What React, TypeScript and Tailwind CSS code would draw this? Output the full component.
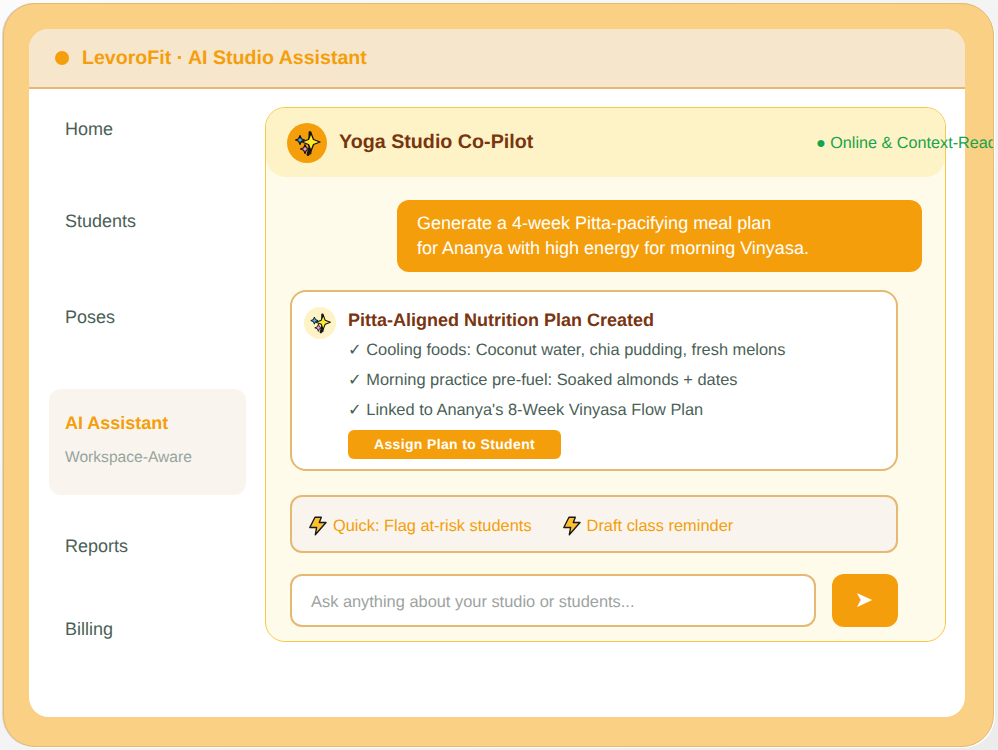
const FONT = "font-['Liberation_Sans',Arial,sans-serif] [text-rendering:geometricPrecision]";

function Sparkles({ size }: { size: number }) {
  return (
    <svg width={size} height={size} viewBox="0 0 30 30" className="shrink-0">
      <path d="M18 4.500V25M18.500 18l-2.500 8.500" stroke="#1a1a1a" strokeWidth="3" strokeLinecap="round" fill="none" />
      <path d="M19 5l2.500 6.500 6.500 2.500-6.500 2.500-2.500 6.500-2.500-6.500-6.500-2.500 6.500-2.500z" fill="#fdeb2c" stroke="#111" strokeWidth="1.300" strokeLinejoin="round" />
      <path d="M8 7.500l1.300 3.200 3.200 1.300-3.200 1.300-1.300 3.200-1.300-3.200-3.200-1.300 3.200-1.300z" fill="#3cb6ee" stroke="#111" strokeWidth="1.200" strokeLinejoin="round" />
      <path d="M13 16.500l1.300 3.200 3.200 1.300-3.200 1.300-1.300 3.200-1.300-3.200-3.200-1.300 3.200-1.300z" fill="#f09ad0" stroke="#111" strokeWidth="1.100" strokeLinejoin="round" />
    </svg>
  );
}

function Bolt() {
  return (
    <svg width="18" height="20" viewBox="0 0 18 20" className="shrink-0 mt-[4px]">
      <path d="M6 1.300h6.300L10.300 6.500h6.700L6.300 18.800l1.300-7.300H.8z" fill="#fcc132" stroke="#1a1a1a" strokeWidth="1.400" strokeLinejoin="round" />
    </svg>
  );
}

function Nav({ label, cls }: { label: string; cls: string }) {
  return <div className={`text-[#4b5f57] text-[18px] leading-5 pl-[36px] ${cls}`}>{label}</div>;
}

export default function App() {
  return (
    <div className={`${FONT} w-[998px] h-[750px] bg-gradient-to-br from-[#fbfbfb] to-[#ececec] p-[3px] overflow-hidden`}>
      <div className="w-[991px] h-[744px] bg-[#fad085] border border-[#e5b873] rounded-[32px] p-[25px] overflow-hidden shadow-[-1px_0_0_#d8d8d8,1px_1px_0_#ffffff]">
        <div className="w-[936px] h-[688px] bg-white rounded-[20px]">
          <div className="h-[60px] bg-[#f5e6cc] border-b-2 border-[#e5b873] rounded-t-[20px] flex items-center pl-[26px] gap-[13px]">
            <div className="w-[14px] h-[14px] rounded-full bg-[#f59e0b]" />
            <div className="text-[#f59e0b] font-bold text-[19.600px] pt-[2px]">LevoroFit · AI Studio Assistant</div>
          </div>
          <div className="flex">
            <div className="w-[236px] shrink-0 flex flex-col">
              <Nav label="Home" cls="mt-[30px]" />
              <Nav label="Students" cls="mt-[72px]" />
              <Nav label="Poses" cls="mt-[76px]" />
              <div className="mt-[62px] ml-[20px] w-[197px] h-[106px] rounded-[12px] bg-[#f9f5ee] pl-[16px] pt-[24px]">
                <div className="text-[#f59e0b] font-bold text-[18px] leading-5">AI Assistant</div>
                <div className="text-[#95a5a0] text-[15.600px] leading-5 mt-[15px]">Workspace-Aware</div>
              </div>
              <Nav label="Reports" cls="mt-[41px]" />
              <Nav label="Billing" cls="mt-[63px]" />
            </div>
            <div className="mt-[18px] w-[681px] h-[535px] bg-[#fffbeb] border border-[#f9c84a] rounded-[20px] flex flex-col">
              <div className="h-[69px] shrink-0 bg-[#fef3c7] rounded-[20px] flex items-center pl-[21px]">
                <div className="w-[40px] h-[40px] rounded-full bg-[#f59e0b] flex items-center justify-center shrink-0">
                  <Sparkles size={30} />
                </div>
                <div className="ml-[12px] text-[#78350f] font-bold text-[19.700px] whitespace-nowrap w-[477px] shrink-0">Yoga Studio Co-Pilot</div>
                <div className="text-[#16a34a] text-[16.200px] whitespace-nowrap pt-[2px]">● Online &amp; Context-Ready</div>
              </div>
              <div className="flex justify-end pr-[23px] mt-[23px]">
                <div className="w-[525px] h-[72px] bg-[#f59e0b] rounded-[12px] text-white text-[18px] leading-[25px] pl-[20px] pt-[11px]">
                  Generate a 4-week Pitta-pacifying meal plan<br />for Ananya with high energy for morning Vinyasa.
                </div>
              </div>
              <div className="mx-[24px] mt-[18px] w-[608px] h-[181px] bg-white border-2 border-[#e5b873] rounded-[16px] flex pl-[12px] pt-[15px] gap-[12px]">
                <div className="w-[32px] h-[32px] rounded-full bg-[#fef3c7] flex items-center justify-center shrink-0">
                  <Sparkles size={24} />
                </div>
                <div className="flex flex-col items-start">
                  <div className="text-[#78350f] font-bold text-[18px] leading-5 mt-[3px]">Pitta-Aligned Nutrition Plan Created</div>
                  <div className="text-[#4b5f57] text-[16.400px] leading-5 mt-[10px]">✓ Cooling foods: Coconut water, chia pudding, fresh melons</div>
                  <div className="text-[#4b5f57] text-[16.400px] leading-5 mt-[10px]">✓ Morning practice pre-fuel: Soaked almonds + dates</div>
                  <div className="text-[#4b5f57] text-[16.400px] leading-5 mt-[10px]">✓ Linked to Ananya's 8-Week Vinyasa Flow Plan</div>
                  <div className="mt-[10px] w-[213px] h-[29px] rounded-[6px] bg-[#f59e0b] text-white font-bold text-[14px] tracking-[0.36px] flex items-center justify-center">Assign Plan to Student</div>
                </div>
              </div>
              <div className="mx-[24px] mt-[24px] w-[608px] h-[58px] bg-[#f9f5ee] border-2 border-[#e5b873] rounded-[12px] flex items-center pl-[17px] text-[#f59e0b] text-[16.400px]">
                <Bolt />
                <span className="ml-[6px] pt-[4px]">Quick: Flag at-risk students</span>
                <span className="ml-[31px]"><Bolt /></span>
                <span className="ml-[6px] pt-[4px]">Draft class reminder</span>
              </div>
              <div className="mx-[24px] mt-[21px] flex gap-[16px]">
                <div className="w-[526px] h-[53px] bg-white border-2 border-[#e5b873] rounded-[12px] flex items-center pl-[19px] pt-[3px] text-[#9ca3a0] text-[16.400px]">Ask anything about your studio or students...</div>
                <div className="w-[66px] h-[53px] bg-[#f59e0b] rounded-[12px] flex items-center justify-center text-white text-[22px] pb-[2px] pr-[2px]">➤</div>
              </div>
            </div>
          </div>
        </div>
      </div>
    </div>
  );
}
